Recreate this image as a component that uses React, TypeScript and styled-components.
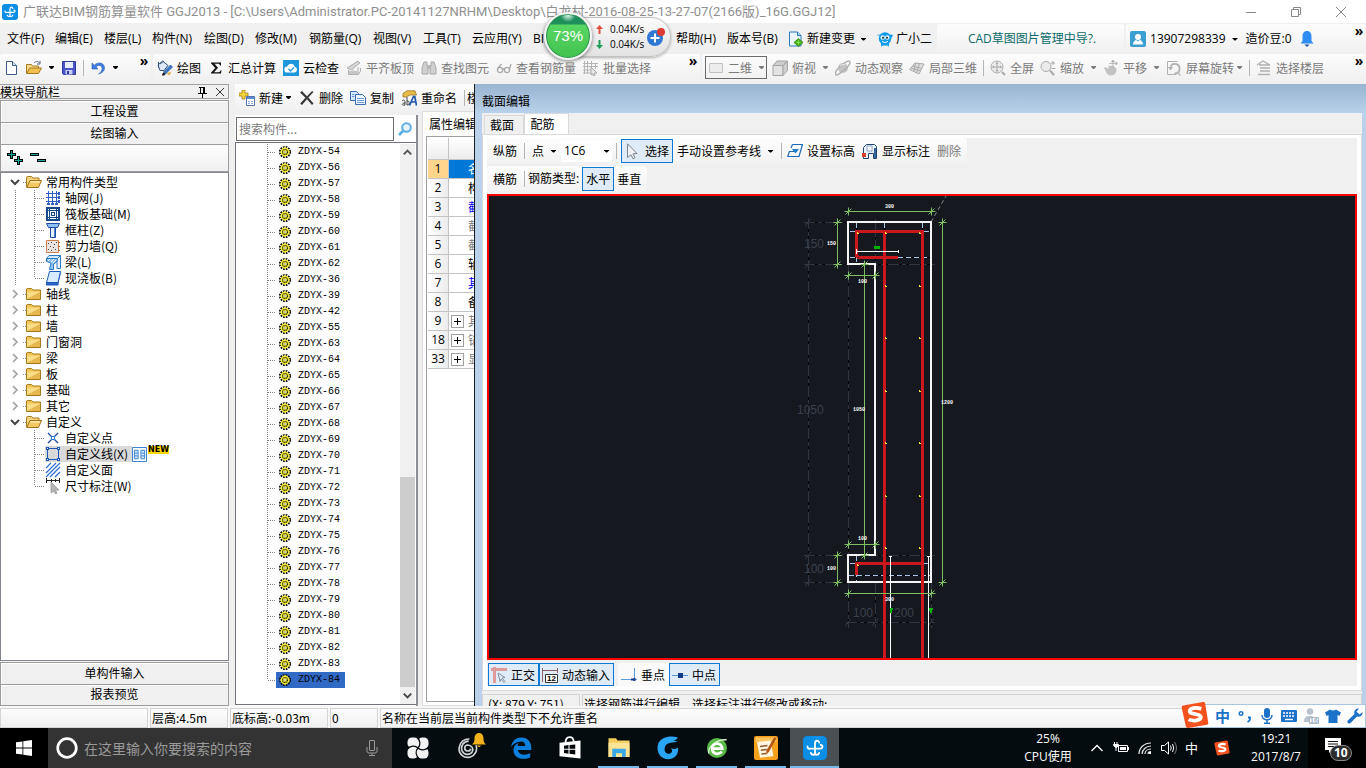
import React from "react";
import styled, { createGlobalStyle } from "styled-components";

const UI_FONT = `"Open Sans", "Noto Sans CJK SC", sans-serif`;
const CJK_FONT = `"Noto Sans CJK SC", sans-serif`;

const GlobalStyle = createGlobalStyle`
  * { box-sizing: border-box; }
  body {
    margin: 0;
    background: #f0f0f0;
    font-family: ${UI_FONT};
    font-size: 12px;
    line-height: 16px;
    color: #000;
    overflow: hidden;
  }
  button, input, select {
    font: inherit;
    color: inherit;
    margin: 0;
    padding: 0;
    border: 0;
    background: none;
    border-radius: 0;
    outline: 0;
  }
  button { white-space: nowrap; }
  svg { display: block; flex: none; }
`;

/* ---------- icons ---------- */

const gear = (
  <>
    <circle cx="8" cy="8" r="5.100" fill="none" stroke="#111" strokeWidth="2" strokeDasharray="1.700 .970" />
    <circle cx="8" cy="8" r="4.400" fill="#f7ee2c" />
    <path d="M8 3v10M3 8h10" stroke="#f7ee2c" />
    <circle cx="8" cy="8" r="2.500" fill="none" stroke="#22220c" strokeWidth="1.200" strokeDasharray="1.400 .560" />
    <path d="M7 7h2v2H7z" fill="#fbfbe0" />
    <path d="M7.500 7.500h1v1h-1z" fill="#333" />
  </>
);

const ggjMark = (
  <>
    <rect x="0" y="0" width="16" height="16" rx="3" fill="#0a8ee6" />
    <path d="M8 12.500V4.800c0-2 2.600-2.200 2.800-.4M3 7c0 1.900 1.400 1.500 2.400 1.400h5.800c2.200 0 2.400-2.400.6-2.400M5.200 11.200c.4 1.700 2.800 1.800 2.800 0 0 1.800 2.400 1.700 2.800 0" fill="none" stroke="#fff" strokeWidth="1.200" strokeLinecap="round" />
  </>
);

const sogou = (
  <>
    <path d="M1.200 2.600 12.600.6q1-.2 1.200.8l1.800 11q.2 1-.8 1.200L4 15.400q-1 .2-1.200-.8L.4 4q-.2-1.200.8-1.400z" fill="#f4511e" />
    <path d="M11.600 4.500C8.500 3.300 4.800 4 5 6c.2 2 6.300 1 6.300 3.200 0 2-4.300 2.600-6.900 1.300" fill="none" stroke="#fff" strokeWidth="2.200" />
  </>
);

const folderClosed = (
  <>
    <path d="M.5 3.500q0-1 1-1h4l1.500 1.500h7.500v9.500h-14z" fill="#f0c14b" stroke="#a67b20" />
    <path d="M1 5.500h13V13H1z" fill="#fbdc86" />
    <path d="M1 13 14 6v7z" fill="#dfa53a" opacity=".7" />
  </>
);

const folderOpen = (
  <>
    <path d="M.5 13V3.500q0-1 1-1h4l1.500 1.500h6v3" fill="#f6d27a" stroke="#a67b20" />
    <path d="M.8 13.500 4 6.500h11.500l-3 7z" fill="#f3c862" stroke="#a0741a" />
    <path d="M4.600 7.300h9.600l-.6 1.300H4z" fill="#fdf0c0" />
  </>
);

const icons: Record<string, React.ReactNode> = {
  gear,
  ggj: ggjMark,
  sogou,
  folderClosed,
  folderOpen,
  newFile: (
    <>
      <path d="M2.500 1.500h6l4 4v9h-10z" fill="#fff" stroke="#3f5a86" />
      <path d="M8.500 1.500v4h4" fill="#cfe0f5" stroke="#3f5a86" />
    </>
  ),
  open: (
    <>
      <path d="M.5 13.500V4.500h5l1 1.500h6v2" fill="#f8dd8c" stroke="#a57a20" />
      <path d="M.8 13.500 3.500 8h12l-3 5.500z" fill="#f0bf4c" stroke="#a57a20" />
      <path d="M8 3c2-2 4-2 5.500 0M14 .800V4h-3" fill="none" stroke="#55677f" />
    </>
  ),
  save: (
    <>
      <path d="M1.500 1.500h13v13h-12l-1-1z" fill="#4a56c8" stroke="#2f3a9c" />
      <path d="M4 2h8v6H4z" fill="#e8ecfb" />
      <path d="M4.500 10h7v4.500h-7z" fill="#c9cfee" />
      <path d="M6 11h2v3H6z" fill="#2f3a9c" />
    </>
  ),
  undo: (
    <path d="M2 3v6h6L6 7c2-2.500 5.500-2 6 .8.4 2.400-1 4.700-3.500 6.200C12.500 13 15 10.500 14.400 7 13.700 2.600 8 1.500 4.300 5.200z" fill="#3f7fe0" stroke="#2b5cb0" strokeWidth=".6" />
  ),
  paint: (
    <>
      <path d="M1 5 5.500 1 11 5.500 7 10.500H3z" fill="#dfe8f4" stroke="#32527e" />
      <path d="M1.500 2v6M3 4l4-3" stroke="#32527e" fill="none" />
      <path d="m6.500 12 7-7 2 2-7 7z" fill="#3c7ac8" stroke="#1f4d8c" strokeWidth=".7" />
      <path d="M5 15.500c0-2 1-3 2-3L8.500 14c-.5 1.500-2 1.800-3.500 1.500z" fill="#222" />
      <path d="m9.500 13.500 5-2-2 4z" fill="#e4b23c" />
    </>
  ),
  sigma: (
    <path d="M3 2.500h10v3h-1c-.2-1.200-.8-1.700-2-1.700H6.500l3.500 4-4 4.400h4.500c1.200 0 1.800-.6 2.200-1.900h.8l-.5 3.200H3v-.8l4.300-4.600L3 3.200z" fill="#111" />
  ),
  cloudCheck: (
    <>
      <rect width="16" height="16" fill="#1f97dc" />
      <path d="M4.500 12.500a3 3 0 0 1-.3-6 4 4 0 0 1 7.600.2 3 3 0 0 1-.1 5.800z" fill="#fff" />
      <path d="m5.500 9 2 2 3.500-3.500" fill="none" stroke="#1f97dc" strokeWidth="1.300" />
    </>
  ),
  alignSlab: (
    <>
      <path d="M1 8 12 1l2 2L5 10z" fill="#d5d5d5" stroke="#b0b0b0" />
      <path d="M2.500 10v4.500h10l2-3.500v-3M7 9.500v5M12 7v7" fill="none" stroke="#b0b0b0" />
      <path d="M3 11h9v3H3z" fill="#c6c6c6" />
    </>
  ),
  binocular: (
    <>
      <path d="M3 2h3v4l1 2v6H1V8zM10 2h3l2 6v6H9V8l1-2z" fill="#d0d0d0" stroke="#a8a8a8" />
      <path d="M6.500 5h3v4h-3z" fill="#b5b5b5" />
    </>
  ),
  glasses: (
    <g fill="none" stroke="#a9a9a9" strokeWidth="1.300">
      <circle cx="4" cy="10" r="2.600" />
      <circle cx="11" cy="10" r="2.600" />
      <path d="M6.500 9.500q1-1 2 0M2 8 5.500 4M13.500 9 15 4" />
    </g>
  ),
  batch: (
    <>
      <path d="M1.500 1v13M4.500 1v13M8.500 1v9M12.500 3v6M0 3.500h15M0 6.500h15M0 10h8M0 13h8" stroke="#b5b5b5" />
      <path d="m8 7 6 6-3 .2 1 2.300-1.500.5-1-2.300L8 15z" fill="#e8e8e8" stroke="#999" strokeWidth=".8" />
    </>
  ),
  plane: <path d="M1.500 3.500h13v9h-13z" fill="#ececec" stroke="#c2c2c2" />,
  cube: (
    <>
      <path d="M1 5.500h10v10H1z" fill="#e2e2e2" stroke="#a5a5a5" />
      <path d="m1 5.500 4-4.500h10.500L11 5.500zM11 15.500V5.500L15.500 1v9.500z" fill="#cecece" stroke="#a5a5a5" />
    </>
  ),
  orbit: (
    <>
      <circle cx="8" cy="8" r="5" fill="#c4c4c4" />
      <path d="M1 15C-1 12 4 7 8 4s7-4 7-2-3 6-7 9-6 5-7 4z" fill="none" stroke="#b0b0b0" strokeWidth="1.400" />
      <path d="M5 6c2-2 4-2 5-1" stroke="#eee" fill="none" />
    </>
  ),
  local3d: (
    <g fill="#dedede" stroke="#ababab">
      <path d="M.5 9.500 6 3l9 1-5 10z" />
      <path d="M3.500 6l9 2.500M6.500 3l-1.500 8.500M10.500 3.500 7.500 13M2 8l9.500 3" fill="none" />
    </g>
  ),
  fullscreen: (
    <g fill="none" stroke="#ababab">
      <circle cx="7" cy="7" r="6" fill="#ebebeb" />
      <path d="M7 2.500v9M2.500 7h9" />
      <path d="m7 2-1.500 2h3zM7 12l-1.500-2h3zM2 7l2-1.500v3zM12 7l-2-1.500v3z" fill="#ababab" stroke="none" />
      <path d="m12 12 3 3" strokeWidth="2" />
    </g>
  ),
  zoom: (
    <g fill="none" stroke="#ababab">
      <circle cx="6" cy="6.500" r="5" fill="#ebebeb" />
      <path d="m10 10.500 4 4.500" strokeWidth="2.200" />
      <path d="M11 3h4M13 1v4M11.500 8.500h4" />
    </g>
  ),
  pan: (
    <>
      <path d="M1 7.500c2-1 3 1 4.500 1.500V6c3-1 7.500 0 8 3.500.3 3-2 6-5.500 6-3.500 0-4.500-2-7-8z" fill="#c2c2c2" />
      <path d="M10 0v8M6 3.500h8M10 0 8.500 2h3zM14.500 3.500 13 2v3z" fill="#b0b0b0" stroke="#b0b0b0" strokeWidth=".8" />
    </>
  ),
  rotate: (
    <g fill="none" stroke="#b0b0b0">
      <path d="M1.500 14.500v-13h10M1.500 14.500h9M13 12.500v2.500h2" />
      <path d="M4.500 6.500a4.800 4.800 0 1 1 4 7" strokeWidth="1.800" />
      <path d="M2 7h5l-2.500 3.500z" fill="#b0b0b0" stroke="none" />
    </g>
  ),
  floors: (
    <g fill="none" stroke="#b0b0b0" strokeWidth="1.400">
      <path d="m1 5 6-4 7 4M3 5h11M4 8h10M4 11h10M2 14.500h12" />
    </g>
  ),
  changeDoc: (
    <>
      <path d="M1.500 1h8l3.500 3.500V15H1.500z" fill="#eaf5fd" stroke="#2b7cb8" />
      <path d="M9.500 1v3.500H13" fill="#9fd0ef" stroke="#2b7cb8" />
      <path d="m10.500 7.500 4.500 4-4.500 4-4.500-4z" fill="#41b014" stroke="#2c7d0c" strokeWidth=".7" />
      <path d="M10.500 9.500v4M8.500 11.500h4" stroke="#8ee05d" />
    </>
  ),
  mascot: (
    <>
      <path d="M0 4.500c1-1.500 3-1.500 4 0M12 4.500c1-1.500 3-1.500 4 0l-2 3H2z" fill="#0f9be8" />
      <path d="M4 12h8v3.500l-2-1h-4l-2 1z" fill="#0f9be8" />
      <circle cx="8" cy="7.500" r="6.200" fill="#0f9be8" />
      <circle cx="5.700" cy="6.500" r="2.200" fill="#e8f6ff" />
      <circle cx="10.300" cy="6.500" r="2.200" fill="#e8f6ff" />
      <circle cx="6" cy="6.700" r="1" fill="#123" />
      <circle cx="10" cy="6.700" r="1" fill="#123" />
      <path d="M5 10.300c2 1.500 4 1.500 6 0" stroke="#fff" fill="none" />
    </>
  ),
  user: (
    <>
      <rect width="16" height="16" rx="2" fill="#3c9fd2" />
      <circle cx="8" cy="6" r="3" fill="#fff" />
      <path d="M3 13.500c0-3 2-4.500 3.500-4.500L8 10.500 9.500 9c1.500 0 3.500 1.500 3.500 4.500z" fill="#fff" />
    </>
  ),
  bell: (
    <>
      <path d="M8 0c3.200 0 4.500 2.500 4.500 5.500V10l2 2.500h-13l2-2.500V5.500C3.500 2.500 4.800 0 8 0z" fill="#2f8df2" />
      <path d="M5.500 13.500h5L8 16z" fill="#1c4f95" />
    </>
  ),
  addItem: (
    <>
      <path d="M3 0h3v3h3v3H6v3H3V6H0V3h3z" fill="#f3d43c" stroke="#a6821a" strokeWidth=".8" />
      <path d="M7.500 6.500h8v9h-8z" fill="#fff" stroke="#5074ac" />
      <path d="M8 7h7v2H8z" fill="#5c8bd0" />
      <path d="M9 11.500h2M12 11.500h2M9 13.500h2M12 13.500h2" stroke="#88a8d4" />
    </>
  ),
  remove: <path d="M1 2.500 3 1l5 5.200L13 1l1.500 1L9.400 7.600l5.100 6L13 15 8 9.300 3 15l-1.800-1.400L6.400 7.700z" fill="#3a3a3a" />,
  copy: (
    <>
      <path d="M.5 1.500h6l2 2v7h-8z" fill="#d7e8fb" stroke="#3b6cb4" />
      <path d="M5.500 4.500h7l3 3v7h-10z" fill="#eef5fd" stroke="#3b6cb4" />
      <path d="M2 4.500h2.500M2 6.500h2.500M7 8.500h7M7 10.500h7M7 12.500h7" stroke="#6f9bd8" />
    </>
  ),
  rename: (
    <>
      <path d="M2 3.500 6 .800h8L15.500 5H9L5 7H2z" fill="#e9bd45" stroke="#8b6a1e" strokeWidth=".7" />
      <path d="M1 11c2-2 3-.5 3 1v3c-3 1-4-1.500 0-2.200M6 7v8c3 .500 3-4.500 0-4" fill="none" stroke="#444" />
      <path d="m8.500 15.500 4-9h1.300l1.700 9M10 12h5" fill="none" stroke="#1d54a8" strokeWidth="1.700" />
    </>
  ),
  search: (
    <g fill="none" stroke="#5aaee6">
      <circle cx="9.500" cy="6.500" r="4.300" strokeWidth="2" fill="#e6f4fd" />
      <path d="m6 10-4 4" strokeWidth="2.600" />
    </g>
  ),
  pin: <path d="M5 3.500h6M6.500 3v6M10.500 3v6M9.500 3v6M4 9.500h9M8.500 10v4" stroke="#000" fill="none" shapeRendering="crispEdges" />,
  close: <path d="m4 4 8 8M12 4l-8 8" stroke="#333" fill="none" />,
  plusPlus: (
    <g shapeRendering="crispEdges">
      <path d="M3 0h3v3h3v3H6v3H3V6H0V3h3zM10 6h3v3h3v3h-3v3h-3v-3H7V9h3z" fill="#000" />
      <path d="M4 1h1v3h3v1H5v3H4V5H1V4h3zM11 7h1v3h3v1h-3v3h-1v-3H8v-1h3z" fill="#12a89e" />
    </g>
  ),
  minusMinus: (
    <g shapeRendering="crispEdges">
      <path d="M0 3h9v3H0zM7 9h9v3H7z" fill="#000" />
      <path d="M1 4h7v1H1zM8 10h7v1H8z" fill="#12a89e" />
    </g>
  ),
  chevDown: <path d="m4 6 4 4 4-4" fill="none" stroke="#444" strokeWidth="2" />,
  chevUp: <path d="m4 10 4-4 4 4" fill="none" stroke="#555" strokeWidth="2" />,
  chevRight: <path d="m6 4 4 4-4 4" fill="none" stroke="#a0a0a0" strokeWidth="1.600" />,
  grid: (
    <g stroke="#2c5fc0" fill="none" shapeRendering="crispEdges">
      <path d="M3.500 1v14M7.500 1v14M11.500 1v14M1 3.500h14M1 7.500h14M1 11.500h14" />
      <path d="M13.500 2.500h1v2h-1zM13.500 6.500h1v2h-1zM13.500 10.500h1v2h-1zM2.500 13.500h2v1h-2zM6.500 13.500h2v1h-2zM10.500 13.500h2v1h-2z" />
    </g>
  ),
  raft: (
    <g stroke="#174a8c" fill="none" shapeRendering="crispEdges">
      <path d="M2 2h12v12H2z" strokeWidth="2" />
      <path d="M4.500 4.500h7v7h-7zM6.500 6.500h3v3h-3zM3 4.500h10M3 11.500h10M4.500 3v10M11.500 3v10" />
    </g>
  ),
  column: (
    <>
      <path d="M1.500 1.500h13l-2 4h-9z" fill="#8fc0f2" stroke="#1d4aa8" />
      <path d="M5.500 5.500h5v10h-5z" fill="#e6f2fe" stroke="#1d4aa8" />
      <path d="M9 6h1v9H9z" fill="#4b82d6" />
    </>
  ),
  wall: (
    <>
      <path d="M1.500 2.500h12v12h-12z" fill="#e9e4e0" stroke="#cc7f50" />
      <path d="M3 5h1v1H3zM6 4h1v1H6zM9 6h1v1H9zM5 8h1v1H5zM8 9h1v1H8zM3 11h1v1H3zM6 12h1v1H6zM10 11h1v1h-1zM11 4h1v1h-1z" fill="#444" />
      <path d="M13 4.500h2M13 8.500h2M13 12.500h2" stroke="#c06020" />
    </>
  ),
  beam: (
    <>
      <path d="M1.500 4.500 4 1.500h11.500l-3 3z" fill="#cfe6fb" stroke="#2a78c8" />
      <path d="M1.500 4.500h11v3L8.500 10v5.500h-4L6 9 1.500 7.500z" fill="#8ec3f2" stroke="#2a78c8" />
      <path d="m12.500 4.500 3-3v13h-3.500V8.500z" fill="#e6f3fe" stroke="#2a78c8" />
      <path d="m3 7 2-2M6 8l3-3M8 9l3-3" stroke="#fff" />
    </>
  ),
  slab: (
    <>
      <path d="M4.500 1.500h11l-2.500 11H1.500z" fill="#d6ebfd" stroke="#1d58b8" />
      <path d="M1.500 12.500H13v2.500H1.500z" fill="#2a66c8" stroke="#1d58b8" />
      <path d="m13 12.500 2.500-11v3L13 15z" fill="#1d58b8" />
    </>
  ),
  point: (
    <>
      <path d="m3 3 10 10M13 3 3 13" stroke="#1d4a9c" strokeWidth="1.300" />
      <path d="M6.500 6.500h3v3h-3z" fill="#fff" stroke="#2d7ad0" />
    </>
  ),
  polyline: (
    <g fill="#fff" stroke="#1d58b8" shapeRendering="crispEdges">
      <path d="M2.500 2.500h11v11h-11z" fill="none" />
      <path d="M1.500 1.500h2v2h-2zM12.500 1.500h2v2h-2zM1.500 12.500h2v2h-2zM12.500 12.500h2v2h-2z" />
    </g>
  ),
  hatch: <path d="M1 6l5-5M1 11 11 1M1 15 15 1M5 15 15 5M10 15l5-5" stroke="#2d6fd0" strokeWidth="1.200" />,
  dimension: (
    <>
      <path d="M1.500 0v5M14.500 0v5M6.500 1v3M10.500 1v3M1 2.500h14" stroke="#222" fill="none" />
      <path d="m6 4 8 8-3.500.3 1.500 3-1.500.7-1.500-3L6 15z" fill="#b4b4b4" stroke="#888" strokeWidth=".6" />
    </>
  ),
  book: (
    <>
      <path d="M.5.500h15v15H.5z" fill="#fff" stroke="#2d7ad0" />
      <path d="M2.500 3.500h4v9h-4zM9.500 3.500h4v9h-4z" fill="#d8ecfc" stroke="#2d7ad0" />
      <path d="M3 6.500h3M3 9.500h3M10 6.500h3M10 9.500h3" stroke="#2d7ad0" />
    </>
  ),
  cursor: <path d="M2.500.800 12 10.500l-4 .300 2 4-2 1-2-4-3.500 2.700z" fill="#f0f2f5" stroke="#7b8390" />,
  elevation: (
    <>
      <path d="M5.500 1.500h10l-3.500 12H.8l1.600-5H9M4 5l1.500-3.500" fill="none" stroke="#1b6cb8" strokeWidth="1.200" />
      <path d="M5 6h7l-3.500 4.500z" fill="#1b7ed0" />
    </>
  ),
  showLabel: (
    <>
      <path d="M1.500 15.500v-11l3-3h8l2 2v12h-3v-5h-5v5z" fill="#e8f0fa" stroke="#21446f" />
      <path d="M5 3h5v5H5z" fill="#fff" stroke="#7692b5" strokeWidth=".8" />
      <path d="M0 10h4v4H0z" fill="#d6402c" />
      <path d="M12 5h2v10h-2z" fill="#35659e" />
    </>
  ),
  ortho: (
    <>
      <path d="M0 2.500h16M3.500 0v16" stroke="#e09a9a" strokeWidth="3" fill="none" />
      <path d="m7 6 7 4.500-3 .500 3 3.500-1 1-3-3.500-1 2.500z" fill="#e6e9ee" stroke="#6b7c96" strokeWidth=".8" />
    </>
  ),
  dynamic: (
    <>
      <path d="M.5 1v14M15.500 1v5M1 3.500h14" stroke="#8a6060" fill="none" />
      <path d="M3.500 7.500h12v8h-12z" fill="#fff" stroke="#333" />
      <text x="5" y="14" fontSize="8" fontWeight="700" fontFamily="Liberation Sans, sans-serif">12</text>
    </>
  ),
  perp: (
    <>
      <path d="M13.500 1v11M0 12.500h16" stroke="#5a9ad8" fill="none" />
      <path d="M13.500 11v3M10 12.500h3" stroke="#12398c" strokeWidth="2" />
    </>
  ),
  mid: (
    <>
      <path d="M0 8.500h16" stroke="#5a9ad8" fill="none" />
      <path d="M6 6h5v5H6z" fill="#12398c" />
    </>
  ),
  win: <path d="m0 2.300 6.500-.9v6.200H0zM7.300 1.300 16 0v7.600H7.300zM0 8.400h6.500v6.200L0 13.700zM7.300 8.400H16V16l-8.700-1.300z" fill="#fff" />,
  ring: <circle cx="8" cy="8" r="6.200" fill="none" stroke="#fff" strokeWidth="1.800" />,
  mic: (
    <g fill="none" stroke="#9a9a9a">
      <rect x="5.500" y=".5" width="5" height="10" rx=".5" />
      <path d="M3 7v4q0 2 2 2h6q2 0 2-2V7M8 13v3M5 15.500h6" />
    </g>
  ),
  pinwheel: (
    <>
      <g fill="#f2f2f2">
        <rect x="1" y="1" width="7.500" height="7" rx="3" />
        <rect x="8" y="1" width="7" height="7.500" rx="3" />
        <rect x="7.500" y="8" width="7.500" height="7" rx="3" />
        <rect x="1" y="7.500" width="7" height="7.500" rx="3" />
        <circle cx="8" cy="8" r="3" />
      </g>
      <path d="M8 8C10 6 9.500 3 7.500 1M8 8c2 2 5 1.500 7-.5M8 8c-2 2-1.500 5 .5 7M8 8C6 6 3 6.500 1 8.500" fill="none" stroke="#05090c" strokeWidth=".8" />
    </>
  ),
  swirl: (
    <path d="M10 8.500a2.200 2.200 0 1 1-2.200-2.700c2.800 0 4.400 2.600 3.300 4.900-1.400 2.700-5.800 2.700-7.300-.5C2.300 6.700 4.800 3 8.500 3M13.800 6c1.300 3.600-.5 7.300-4 8.500-4.700 1.500-9-2.200-8.200-7C2.300 3.500 5.500 1.200 9 1.500" fill="none" stroke="#d0d4d6" strokeWidth="1.200" />
  ),
  goldBell: <path d="M8 1c3 0 4.500 2.500 4.500 5.500 0 3 .500 4 2.500 6H1c2-2 2.500-3 2.500-6C3.500 3.500 5 1 8 1zM6 13.500h4q-2 3-4 0z" fill="#f2b21b" />,
  edge: (
    <path d="M.8 7.200C1.500 2.500 4.600.300 8.300.300c4.600 0 7.200 3.300 7.200 7.300v1.900H5.800c.2 2.300 2.200 3.400 4.600 3.400 1.600 0 3.100-.5 4.300-1.200v3c-1.300.8-3.100 1.200-4.900 1.200-4.300 0-7.300-2.500-7.300-6.500C2.500 7 4 5 6.400 4.100c-.5.700-.8 1.600-.8 2.400h5.500c0-2-.9-3.300-3.200-3.300C5.100 3.200 2.300 4.700.8 7.200z" fill="#0c7fdc" />
  ),
  store: (
    <>
      <path d="M1 4.500 15 3v12L1 13.500z" fill="#fff" />
      <path d="M5 4.500C5-.500 10.500-.5 10.500 4" fill="none" stroke="#fff" strokeWidth="1.200" />
      <path d="M4 6.500 7 6v2.500H4zM7.700 6l3.800-.4v2.900H7.700zM4 9.200h3v2.600l-3-.4zM7.700 9.200h3.800v3.100l-3.800-.4z" fill="#05090c" />
    </>
  ),
  explorer: (
    <>
      <path d="M1 1.500h5l1 1.500h8v11H1z" fill="#f5cd5d" />
      <path d="M1 4.500h14V14H1z" fill="#fde394" />
      <path d="M3.500 8.500h9V14H10v-2.500H6V14H3.500z" fill="#3aa7e6" />
    </>
  ),
  gBlue: (
    <path d="M14.500.800C9-.500 3.500.500 1.500 5-.3 10.500 3 15.500 8 15.500c4.500 0 7.500-3.500 6.500-8-1 1.500-3 1.500-4.500.5 1 1.200 1 2.700-.3 3.500-2 1-4-.3-4-2.500C5.700 6.500 7 5.200 9 4.700c2-.5 4.500-.4 5.500-1.200-1 .1-2 0-2.700-.5 1.200-.3 2.200-1 2.700-2.200z" fill="#2aa5f4" />
  ),
  eGreen: (
    <>
      <circle cx="8" cy="8" r="7.300" fill="#58b947" />
      <path d="M2 12C1 8 7 1.500 15 2" stroke="#d8f5cf" fill="none" />
      <path d="M4.500 8.500h7.300C11.500 3.500 4.500 3.700 4.500 8.500c0 4 5 4.800 7 2" fill="none" stroke="#fff" strokeWidth="2" />
    </>
  ),
  notes: (
    <>
      <rect width="16" height="16" rx="1.500" fill="#f6a01c" />
      <path d="M1 1h14v3H1z" fill="#fbc35c" />
      <path d="m2 4 9-1 2 10.500-9 1z" fill="#fff6e0" />
      <path d="m4 7 5-.7M4.500 9.500l4-.5M5 12l3-.3" stroke="#8c5a30" />
      <path d="M15 1.500 10 10.500l-2 2 .3-2.800L13.500.800z" fill="#b5561a" />
    </>
  ),
  caretUp: <path d="m2.500 11 5.500-5.500L13.500 11" fill="none" stroke="#fff" strokeWidth="1.300" />,
  battery: (
    <>
      <path d="M5.500 5.500h9v6h-9zM15.500 7v3" fill="none" stroke="#fff" />
      <path d="M7 7h6v3H7z" fill="#fff" />
      <path d="M1.500 2v2M4 2v2M.5 4.500h5V6q-2.500 3-4.500 0zM3 7v4" stroke="#fff" fill="#fff" />
    </>
  ),
  wifi: (
    <g fill="none" stroke="#e8e8e8" strokeWidth="1.200">
      <path d="M2 14C2 8 7 3 14 3M5 14c0-4 4-8 9-8M8 14c0-3 2.500-5 6-5M11 14c0-1.500 1-2.500 3-2.500" />
      <path d="M12 12h2v2h-2z" fill="#fff" stroke="none" />
    </g>
  ),
  volume: (
    <g fill="none" stroke="#fff">
      <path d="M.5 5.500h3l4-3.500v12l-4-3.500h-3z" />
      <path d="M9.500 5.500q1.500 2.500 0 5M11.500 4q2.500 4 0 8" />
      <path d="M13.500 2q4 6 0 12" stroke="#777" />
    </g>
  ),
  notice: (
    <>
      <path d="M0 0h16v12H7l-3 3v-3H0z" fill="#fff" />
      <path d="M3 3.500h10M3 6h10M3 8.500h6" stroke="#111" />
    </>
  ),
  punct: (
    <g fill="none" stroke="#1c72c8">
      <circle cx="4" cy="5.500" r="1.800" strokeWidth="1.400" />
      <path d="M11 9.500h2q.5 3-2.500 4.500" strokeWidth="1.800" />
    </g>
  ),
  micBlue: (
    <g>
      <rect x="5" y="0" width="6" height="10" rx="3" fill="#1c72c8" />
      <path d="M3 7c0 6.500 10 6.500 10 0M8 12v3M5 15.200h6" stroke="#1c72c8" strokeWidth="1.500" fill="none" />
    </g>
  ),
  keyboard: (
    <>
      <rect y="2" width="16" height="12" rx="1" fill="#1c72c8" />
      <path d="M2 5h12M2 8h12" stroke="#fff" strokeWidth="1.400" strokeDasharray="2 1" />
      <path d="M4 11.500h8" stroke="#fff" strokeWidth="1.400" />
    </>
  ),
  person: (
    <>
      <circle cx="7" cy="3.500" r="3.200" fill="#b8c3d0" />
      <path d="M1 14c0-5 2-6 6-6s5 2 5 6z" fill="#b8c3d0" />
      <path d="M6.500 9.500h9v6h-9z" fill="#fff" stroke="#a9b7c8" />
      <text x="7" y="15" fontSize="7" fontWeight="700" fill="#a0b0c4" fontFamily="Liberation Sans, sans-serif">16</text>
    </>
  ),
  shirt: <path d="M5 1.500q3 2 6 0l5 3-1.700 3.500L12.500 7v8h-9V7l-1.800 1L0 4.500z" fill="#1c72c8" />,
  wrench: <path d="M15.500 4 12.500 6.500l-3-3L12 .5C8.500 0 6.500 3 7.500 6L.8 12.500c-1.500 2 1 4 2.700 2.500L10 8.500C13.500 9.500 16 7 15.500 4z" fill="#1c72c8" />,
};

const Icon = ({ name, size = 16 }: { name: string; size?: number }) => (
  <svg width={size} height={size} viewBox="0 0 16 16" aria-hidden="true">
    {icons[name]}
  </svg>
);

/* ---------- shared parts ---------- */

const Caret = styled.i<{ $tight?: boolean }>`
  flex: none;
  width: 9px;
  height: 3px;
  margin-left: ${(p) => (p.$tight ? "-4px" : "0")};
  background: currentColor;
  clip-path: polygon(3px 0, 8px 0, 8px 1px, 6px 3px, 5px 3px, 3px 1px);
`;

const Sep = styled.span`
  flex: none;
  width: 1px;
  height: 16px;
  background: #b4b4b4;
`;

const Band = styled.div<{ $basis?: number; $gap?: number }>`
  display: flex;
  align-items: center;
  gap: ${(p) => p.$gap ?? 7}px;
  padding: 0 1px 0 4px;
  min-width: 0;
  flex: ${(p) => (p.$basis ? `0 0 ${p.$basis}px` : "1 1 0")};
  border-radius: 3px;
  background: linear-gradient(#fdfdfd, #f0f0f0);
`;

const ToolButton = styled.button<{ $dim?: boolean; $on?: boolean }>`
  flex: none;
  display: flex;
  align-items: center;
  gap: 4px;
  height: 24px;
  color: ${(p) => (p.$dim ? "#7a7a7a" : "#000")};
  font-family: ${CJK_FONT};
  ${(p) =>
    p.$on &&
    `
    padding: 0 3px;
    border: 1px solid #0a78d4;
    background: #dfebf6;
  `}
`;

const Account = styled(ToolButton)`
  font-family: ${UI_FONT};
`;

const More = styled.button`
  align-self: flex-start;
  margin-left: auto;
  width: 12px;
  height: 14px;
  font: 700 14px/12px "Open Sans", sans-serif;
`;

const Tool = (p: { icon?: string; label?: string; dim?: boolean; on?: boolean; caret?: boolean; tight?: boolean; name?: string }) => (
  <ToolButton type="button" $dim={p.dim} $on={p.on} aria-label={p.name}>
    {p.icon && <Icon name={p.icon} />}
    {p.label}
    {p.caret && <Caret $tight={p.tight} />}
  </ToolButton>
);

/* ---------- frame ---------- */

const Page = styled.div`
  display: flex;
  flex-direction: column;
  height: 100vh;
  position: relative;
`;

const TitleBar = styled.header`
  flex: none;
  display: flex;
  align-items: center;
  height: 23px;
  padding-left: 2px;
  gap: 5px;
  background: #fff;
  color: #8f8f8f;
  font-family: Roboto, ${CJK_FONT};
  font-size: 13px;
  white-space: nowrap;
`;

const WinButtons = styled.div`
  display: flex;
  gap: 29px;
  margin-left: auto;
  padding-right: 17px;
`;

const MenuBar = styled.nav`
  flex: none;
  display: flex;
  height: 31px;
  gap: 2px;
  padding-top: 1px;
`;

const MenuItems = styled.div`
  display: flex;
  align-items: center;
  gap: 10px;
  flex: 0 0 935px;
  padding-left: 7px;
`;

const MenuButton = styled.button<{ $w: number }>`
  flex: 0 0 ${(p) => p.$w}px;
  display: flex;
  align-items: center;
  gap: 3px;
`;

const News = styled.a`
  flex: 1;
  text-align: center;
  color: #0b6b6b;
  text-decoration: none;
`;

const ToolBar = styled.div`
  flex: none;
  display: flex;
  height: 30px;
  gap: 2px;
  padding-bottom: 3px;
`;

const Combo = styled.label`
  flex: none;
  display: flex;
  align-items: center;
  gap: 4px;
  width: 62px;
  height: 23px;
  margin: 0 -1px;
  padding: 0 2px;
  border: 1px solid #6a6a6a;
  color: #7a7a7a;
  select { appearance: none; width: 24px; font-family: ${CJK_FONT}; }
`;

const Main = styled.main`
  flex: 1 1 0;
  min-height: 0;
  display: flex;
  overflow: hidden;
`;

/* ---------- navigation panel ---------- */

const NavPanel = styled.aside`
  flex: 0 0 229px;
  display: flex;
  flex-direction: column;
`;

const NavHead = styled.div`
  display: flex;
  align-items: center;
  height: 15px;
  margin-bottom: 1px;
  border: 1px solid #a0a0a0;
  border-left: 0;
  h2 { margin: 0 auto 0 0; font: 12px/13px ${CJK_FONT}; }
  button + button { margin-left: 2px; }
`;

const NavButton = styled.button`
  height: 22px;
  border: 1px solid #9c9c9c;
  border-bottom-width: 0;
  box-shadow: inset 1px 1px #fff;
  text-align: center;
  &:last-child { border-bottom-width: 1px; }
`;

const NavTools = styled.div`
  display: flex;
  align-items: center;
  gap: 7px;
  height: 28px;
  padding-left: 6px;
  border: 1px solid #9c9c9c;
  background: linear-gradient(#fdfdfd, #f0f0f0);
`;

const TreeBox = styled.div`
  flex: 1;
  min-height: 0;
  margin-bottom: 1px;
  padding: 1px 0 0 2px;
  border: 1px solid #828790;
  background: #fff;
  overflow: hidden;
`;

const TreeRow = styled.div`
  display: flex;
  align-items: center;
  height: 16px;
  font-family: ${CJK_FONT};
  white-space: nowrap;
`;

const TreeLabel = styled.span<{ $on?: boolean }>`
  display: flex;
  align-items: center;
  gap: 4px;
  height: 16px;
  padding-right: 4px;
  background: ${(p) => (p.$on ? "#d9d9d9" : "none")};
`;

const NewTag = styled.sup`
  align-self: flex-start;
  margin-left: 1px;
  background: #ffd800;
  font: 700 8px/8px "DejaVu Sans", sans-serif;
`;

type Node = { icon?: string; label: string; open?: boolean; leaf?: boolean; last?: boolean; on?: boolean; rail?: boolean };

const nodes: Node[] = [
  { label: "常用构件类型", open: true },
  { label: "轴网(J)", icon: "grid", leaf: true, rail: true },
  { label: "筏板基础(M)", icon: "raft", leaf: true, rail: true },
  { label: "框柱(Z)", icon: "column", leaf: true, rail: true },
  { label: "剪力墙(Q)", icon: "wall", leaf: true, rail: true },
  { label: "梁(L)", icon: "beam", leaf: true, rail: true },
  { label: "现浇板(B)", icon: "slab", leaf: true, rail: true, last: true },
  { label: "轴线" },
  { label: "柱" },
  { label: "墙" },
  { label: "门窗洞" },
  { label: "梁" },
  { label: "板" },
  { label: "基础" },
  { label: "其它" },
  { label: "自定义", open: true },
  { label: "自定义点", icon: "point", leaf: true },
  { label: "自定义线(X)", icon: "polyline", leaf: true, on: true },
  { label: "自定义面", icon: "hatch", leaf: true },
  { label: "尺寸标注(W)", icon: "dimension", leaf: true, last: true },
];

const TreeNode = ({ n }: { n: Node }) =>
  n.leaf ? (
    <TreeRow>
      <svg width="42" height="16" stroke="#808080" strokeDasharray="1 1" shapeRendering="crispEdges">
        {n.rail && <path d="M12.500 0v16" />}
        <path d={`M31.500 0v${n.last ? 8 : 16}M32 8.500h10`} />
      </svg>
      <TreeLabel $on={n.on}>
        <Icon name={n.icon!} />
        {n.label}
      </TreeLabel>
      {n.on && (
        <>
          <Icon name="book" size={15} />
          <NewTag>NEW</NewTag>
        </>
      )}
    </TreeRow>
  ) : (
    <TreeRow>
      <svg width="23" height="16" aria-hidden="true">
        <g transform="translate(4 0)">{icons[n.open ? "chevDown" : "chevRight"]}</g>
        <path d="M20 8.500h3" stroke="#808080" strokeDasharray="1 1" />
      </svg>
      <TreeLabel>
        <Icon name={n.open ? "folderOpen" : "folderClosed"} />
        {n.label}
      </TreeLabel>
    </TreeRow>
  );

/* ---------- component list and properties ---------- */

const Center = styled.section`
  flex: 0 0 240px;
  display: flex;
  flex-direction: column;
  margin-left: 6px;
  overflow: hidden;
  border-right: 1px solid #1c1c1c;
`;

const CenterTools = styled.div`
  flex: none;
  display: flex;
  align-items: center;
  gap: 7px;
  height: 27px;
  padding-left: 4px;
  background: linear-gradient(#fdfdfd, #f0f0f0);
`;

const CenterBody = styled.div`
  flex: 1;
  min-height: 0;
  display: flex;
  gap: 4px;
`;

const ListPanel = styled.div`
  flex: 0 0 183px;
  display: flex;
  flex-direction: column;
  margin-top: 4px;
  border-right: 2px solid #8d9096;
  background: #fff;
`;

const SearchRow = styled.div`
  flex: none;
  display: flex;
  padding: 2px 0 1px 1px;
  height: 27px;
  input { flex: 1; min-width: 0; padding: 0 2px; border: 1px solid #6e6e6e; font-family: ${CJK_FONT}; }
  input::placeholder { color: #7c7c7c; opacity: 1; }
  button { padding: 0 3px; }
`;

const ListBox = styled.div`
  flex: 1;
  min-height: 0;
  display: flex;
  margin-bottom: 1px;
  border: 1px solid #6e737b;
  border-width: 1px 0 1px 1px;
  padding-top: 1px;
`;

const List = styled.ul`
  flex: 1;
  min-width: 0;
  margin: 0;
  padding: 0;
  list-style: none;
  overflow: hidden;
`;

const ListItem = styled.li`
  display: flex;
  height: 16px;
`;

const ListLabel = styled.span<{ $on?: boolean }>`
  display: flex;
  align-items: center;
  gap: 5px;
  padding: 0 5px 0 1px;
  background: ${(p) => (p.$on ? "#316ac5" : "none")};
  font: 10px/16px "Liberation Mono", monospace;
`;

const Scroll = styled.div`
  flex: 0 0 15px;
  display: flex;
  flex-direction: column;
  margin-right: 1px;
  background: #f0f0f0;
  button { height: 17px; }
`;

const Thumb = styled.div`
  flex: 0 0 210px;
  margin-top: auto;
  background: #cdcdcd;
`;

const PropPanel = styled.div`
  flex: 1;
  min-width: 0;
  display: flex;
  flex-direction: column;
  padding-left: 3px;
  border: 1px solid #dcdcdc;
  border-right: 0;
  background: #fff;
  overflow: hidden;
  h3 { flex: none; margin: 0 0 0 3px; font: 12px/24px ${CJK_FONT}; white-space: nowrap; }
`;

const TableBox = styled.div`
  flex: 1;
  margin-bottom: 3px;
  padding: 1px 0 1px 1px;
  border: 1px solid #a0a0a0;
  border-right: 0;
  overflow: hidden;
`;

const Table = styled.table`
  width: 100%;
  table-layout: fixed;
  border-collapse: separate;
  border-spacing: 0;
  col:first-child { width: 21px; }
  th, td { height: 19px; padding: 0; line-height: 16px; border-bottom: 1px solid #c4c4c4; font-weight: 400; white-space: nowrap; }
  th:first-child { border-right: 1px solid #c4c4c4; }
  thead th { height: 22px; background: linear-gradient(#fff, #ececec); }
`;

const RowHead = styled.th<{ $sel?: boolean }>`
  background: ${(p) => (p.$sel ? "#ffd48c" : "linear-gradient(90deg, #fff, #ececec)")};
`;

const Cell = styled.td<{ $color: string; $sel?: boolean }>`
  color: ${(p) => p.$color};
  background: ${(p) => (p.$sel ? "#0078d7" : "#fff")};
  font-family: ${CJK_FONT};
  overflow: hidden;
  span { display: flex; align-items: center; }
  svg { margin: 0 4px 0 2px; }
  em { font-style: normal; margin-left: 19px; }
  svg + em { margin-left: 0; }
`;

const props: [string, string, string, boolean?][] = [
  ["1", "名", "#fff"],
  ["2", "构", "#000"],
  ["3", "截", "#0000f0"],
  ["4", "截", "#7c7c7c"],
  ["5", "截", "#7c7c7c"],
  ["6", "轴", "#000"],
  ["7", "其", "#0000f0"],
  ["8", "备", "#000"],
  ["9", "其", "#7c7c7c", true],
  ["18", "锚", "#7c7c7c", true],
  ["33", "显", "#7c7c7c", true],
];

const listIds = [54, 56, 57, 58, 59, 60, 61, 62, 36, 39, 42, 55, ...Array.from({ length: 22 }, (_, i) => 63 + i)];

/* ---------- section editor window ---------- */

const Editor = styled.section`
  flex: 1;
  min-width: 0;
  display: flex;
  flex-direction: column;
  padding: 0 4px 0 7px;
  background: #b9d1ea;
  h2 {
    flex: none;
    margin: 0 -4px 0 -7px;
    padding: 5px 0 0 7px;
    height: 29px;
    background: linear-gradient(#99b4d1, #b9d1ea);
    font: 12px/24px ${CJK_FONT};
  }
`;

const EditorBody = styled.div`
  flex: 1;
  min-height: 0;
  display: flex;
  flex-direction: column;
  background: #f0f0f0;
`;

const Tabs = styled.div`
  flex: none;
  display: flex;
  align-items: flex-end;
  height: 21px;
  padding-left: 2px;
`;

const Tab = styled.button<{ $on?: boolean }>`
  width: ${(p) => (p.$on ? "45px" : "40px")};
  height: ${(p) => (p.$on ? "21px" : "19px")};
  padding-right: ${(p) => (p.$on ? "8px" : "4px")};
  border: 1px solid #d9d9d9;
  border-bottom: 0;
  background: ${(p) => (p.$on ? "#fff" : "#f0f0f0")};
  font-family: ${CJK_FONT};
`;

const TabPanel = styled.div`
  flex: 1;
  min-height: 0;
  display: flex;
  flex-direction: column;
  margin-bottom: 3px;
  padding: 3px 4px 4px 4px;
  border: 1px solid #d9d9d9;
  background: #fff;
`;

const PanelFill = styled.div`
  flex: 1;
  min-height: 0;
  display: flex;
  flex-direction: column;
  align-items: flex-start;
  background: #f0f0f0;
`;

const EditBar = styled.div`
  flex: none;
  display: flex;
  align-items: center;
  height: 26px;
  margin-bottom: 2px;
  padding: 0 6px;
  border-radius: 3px;
  background: linear-gradient(#fdfdfd, #f2f2f2);
  gap: 7px;
`;

const Tight = styled.div<{ $gap: number }>`
  display: flex;
  align-items: center;
  gap: ${(p) => p.$gap}px;
`;

const BarSelect = styled.label`
  display: flex;
  align-items: center;
  width: 51px;
  height: 22px;
  background: #fff;
  select { appearance: none; width: 40px; padding-left: 3px; }
`;

const CanvasBox = styled.div`
  flex: 1;
  min-height: 0;
  align-self: stretch;
  border: 2px solid #f00;
  background: #15181f;
  overflow: hidden;
`;

const SnapBar = styled.div`
  flex: none;
  display: flex;
  height: 26px;
  padding: 3px 1px 0;
  font-family: ${CJK_FONT};
`;

const Snap = styled(ToolButton)`
  height: 23px;
  padding: 0 3px 0 2px;
  margin-left: ${(p) => (p.$on ? "0" : "4px")};
  border: 1px solid ${(p) => (p.$on ? "#0a78d4" : "transparent")};
  background: ${(p) => (p.$on ? "#dfebf6" : "#fafafa")};
`;

const EditorStatus = styled.div`
  flex: 0 0 12px;
  display: flex;
  gap: 2px;
  overflow: hidden;
  background: #f0f0f0;
  span {
    flex: 1;
    height: 22px;
    border: 1px solid #d4d4d4;
    padding-left: 1px;
    font: 12px/18px ${CJK_FONT};
    white-space: nowrap;
  }
  span:first-child { flex: 0 0 98px; padding-left: 5px; }
`;

/* Section drawing. Coordinates are in drawing space; the group shifts them to the view. */

const Tick = ({ x, y }: { x: number; y: number }) => (
  <path d={`M${x - 3} ${y + 3}l6-6M${x - 4} ${y}h8M${x} ${y - 4}v8`} />
);

const dark = [
  "M804 222.500h44", "M804 264.500h131", "M804 555.500h131", "M804 582.500h44",
  "M808.500 218v368", "M848.500 265v363", "M875.500 219v45", "M875.500 582v46", "M931.500 583v45", "M846 622.500h89",
];

const hidden = [
  "M850 231.500h7", "M856.500 223v8", "M856.500 257v6", "M884.500 223v7", "M922.500 223v7", "M924 231.500h7",
  "M850 257.500h6", "M898 257.500h32", "M849 575.500h81", "M856.500 556v26", "M850 563.500h6", "M924 563.500h7",
];

const tiny: [number, number, string][] = [
  [885, 208, "300"], [827, 245, "150"], [858, 283, "100"], [853, 411, "1050"],
  [941, 404, "1200"], [858, 540, "100"], [827, 570, "100"], [885, 601, "300"],
];

const faint: [number, number, string][] = [
  [804, 248, "150"], [797, 414, "1050"], [804, 573, "100"], [853, 617, "100"], [894, 617, "200"],
];

const ticks: [number, number][] = [
  [848.5, 211.5], [931.5, 211.5], [837.5, 222.5], [837.5, 264.5], [848.5, 275.5], [875.5, 275.5], [864.5, 264.5], [864.5, 555.5],
  [942.5, 222.5], [942.5, 582.5], [848.5, 544.5], [875.5, 544.5], [837.5, 555.5], [837.5, 582.5], [848.5, 593.5], [931.5, 593.5],
];

const Section = () => (
  <svg width="100%" height="100%" role="img" aria-label="截面配筋图">
    <g transform="translate(-489 -196)" fill="none">
      <g shapeRendering="crispEdges">
        <path d={dark.join("")} stroke="#000" />
        <path d={dark.join("")} stroke="#2f3642" strokeDasharray="11 3 4 3" />
        <path d="M805 226l6-7M805 268l6-7M805 559l6-7M805 586l6-7M845 626l6-7M872 626l6-7M928 626l6-7" stroke="#2f3642" />
      </g>
      <g fill="#3a414d" fontFamily="Liberation Sans, sans-serif" fontSize="12">
        {faint.map(([x, y, t]) => (
          <text key={`${x}-${y}`} x={x} y={y}>{t}</text>
        ))}
      </g>
      <path d="M931 222l15-26" stroke="#8d8d8d" strokeDasharray="4 3" />
      <g shapeRendering="crispEdges">
        <path d={hidden.join("")} stroke="#000" />
        <path d={hidden.join("")} stroke="#a9c6ea" strokeDasharray="5 3" />
        <path d="M848 222H931V582H848V555H875V264H848z" stroke="#f4f4f4" strokeWidth="2" />
        <path d="M898 257.500H858.500L856.500 255.500V231.500H922.500V658M884.500 231V658M856.500 575V563.500H922" stroke="#cc171d" strokeWidth="3" />
        <path d="M856.500 249v5M857 251.500h42M898.500 250v3M890.500 556v102M889 556.500h3M928.500 556v102M927 556.500h3" stroke="#fff" />
        <path d="M848 211.500h83M837.500 222v42M848 275.500h28M864.500 264v291M942.500 222v360M848 544.500h28M837.500 555v27M848 593.500h83" stroke="#7ebd62" />
        <path d="M874 246h6v3h-6zM890 608h3v2h-1v3h-2zM929 608h4v2h-1v3h-2v-2h-1z" fill="#00b400" />
        <g fill="#f3e332">
          <path d="M857 232h1v1h1v1h-2zM885 232h1v1h1v1h-2zM919 232h1v1h1v1h-2zM857 564h1v1h1v1h-2z" />
          {[285, 337, 390, 442, 495, 547].map((y) => (
            <path key={y} d={`M885 ${y}h1v1h1v1h-2zM919 ${y}h1v1h1v1h-2z`} />
          ))}
        </g>
      </g>
      <g stroke="#7ebd62">
        {ticks.map(([x, y]) => (
          <Tick key={`${x}-${y}`} x={x} y={y} />
        ))}
      </g>
      <g fill="#fff" fontFamily="Liberation Mono, monospace" fontSize="5" fontWeight="700">
        {tiny.map(([x, y, t]) => (
          <text key={`${x}-${y}`} x={x} y={y}>{t}</text>
        ))}
      </g>
    </g>
  </svg>
);

/* ---------- status bar and taskbar ---------- */

const StatusBar = styled.footer`
  flex: none;
  display: flex;
  gap: 2px;
  height: 22px;
  padding-top: 2px;
  background: #f7f7f7;
`;

const StatusCell = styled.span<{ $w?: number }>`
  flex: ${(p) => (p.$w ? `0 0 ${p.$w}px` : "1")};
  padding-left: 1px;
  border: 1px solid #d4d4d4;
  background: linear-gradient(#fdfdfd, #f0f0f0);
  font: 12px/18px ${CJK_FONT};
  white-space: nowrap;
`;

const TaskBar = styled.footer`
  flex: none;
  display: flex;
  height: 40px;
  background: #040c10;
  color: #fff;
`;

const StartButton = styled.button`
  flex: 0 0 48px;
  display: grid;
  place-items: center;
  background: #000;
`;

const TaskSearch = styled.label`
  flex: 0 0 344px;
  display: flex;
  align-items: center;
  gap: 5px;
  padding: 0 12px 0 7px;
  background: #333;
  input { flex: 1; min-width: 0; font: 14px/20px ${CJK_FONT}; }
  input::placeholder { color: #9a9a9a; opacity: 1; }
`;

const TaskApp = styled.button<{ $run?: boolean; $active?: boolean; $wide?: boolean }>`
  flex: 0 0 ${(p) => (p.$wide ? 52 : 49)}px;
  display: flex;
  align-items: center;
  justify-content: center;
  background: ${(p) => (p.$active ? "#4a5053" : "none")};
  border-bottom: 2px solid transparent;
  border-top: 2px solid transparent;
  border-image: ${(p) =>
    p.$active
      ? "linear-gradient(90deg, #76b9ed, #76b9ed) 0 0 2 0"
      : p.$run
        ? "linear-gradient(90deg, transparent 4px, #76b9ed 4px, #76b9ed 45px, transparent 45px) 0 0 2 0"
        : "none"};
`;

const Bell = styled.span`
  align-self: flex-start;
  margin: 2px -4px 0 -8px;
`;

const Tray = styled.div`
  flex: 1;
  display: flex;
  align-items: center;
  justify-content: flex-end;
  gap: 8px;
`;

const ImeMode = styled.span`
  width: 21px;
  font: 13px/16px ${CJK_FONT};
`;

const Stack = styled.div<{ $w: number; $after?: number }>`
  width: ${(p) => p.$w}px;
  margin-right: ${(p) => p.$after ?? 0}px;
  text-align: center;
  line-height: 18px;
  white-space: nowrap;
`;

const Notice = styled.button`
  flex: none;
  display: flex;
  align-items: center;
  width: 58px;
  height: 40px;
  margin-left: -14px;
  padding: 0 0 4px 17px;
  background: #000;
  color: #fff;
  span {
    margin: 14px 0 0 -11px;
    padding: 0 3px;
    border: 1px solid #888;
    border-radius: 9px;
    background: #2c2c2c;
    font-weight: 700;
    line-height: 14px;
  }
`;

const ImeBar = styled.div`
  position: absolute;
  right: 0;
  bottom: 40px;
  display: flex;
  align-items: center;
  gap: 6px;
  width: 170px;
  height: 24px;
  padding-left: 18px;
  border: 1px solid #a9c4dc;
  background: #fff;
  color: #1c72c8;
  b { font: 700 15px/20px ${CJK_FONT}; width: 16px; }
`;

const ImeLogo = styled.span`
  position: absolute;
  left: -16px;
  top: -4px;
`;

const Meter = styled.div`
  position: absolute;
  left: 545px;
  top: 17px;
  display: flex;
  align-items: center;
  width: 126px;
  height: 40px;
  padding-left: 50px;
  border: 1px solid #c2c2c2;
  border-radius: 20px;
  background: linear-gradient(#fbfbfb, #e2e2e2);
  box-shadow: 0 1px 3px rgba(0, 0, 0, 0.3);
  font: 10px/15px "Open Sans", sans-serif;
  p { margin: 0; display: flex; gap: 7px; align-items: center; white-space: nowrap; }
`;

const MeterBall = styled.div`
  position: absolute;
  left: -2px;
  top: -6px;
  width: 48px;
  height: 48px;
  display: grid;
  place-items: center;
  border: 2px solid #f3f3f3;
  border-radius: 50%;
  background: radial-gradient(circle at 50% 0, #e4fff0 0 1px, transparent 8px), linear-gradient(#1f8f5c 0 10px, #58d663 11px, #42c24f);
  box-shadow: inset 0 0 0 1px #2c8f52, 0 1px 4px rgba(0, 0, 0, 0.5);
  color: #fff;
  font: 15px/20px "Liberation Sans", sans-serif;
`;

const MeterPlus = styled.button`
  width: 18px;
  height: 22px;
  margin-left: 2px;
`;

const menus: [string, number][] = [
  ["文件(F)", 38], ["编辑(E)", 39], ["楼层(L)", 38], ["构件(N)", 42], ["绘图(D)", 41], ["修改(M)", 44],
  ["钢筋量(Q)", 54], ["视图(V)", 40], ["工具(T)", 39], ["云应用(Y)", 51], ["BI", 133], ["帮助(H)", 41], ["版本号(B)", 51],
];

export default function App() {
  return (
    <Page>
      <GlobalStyle />
      <TitleBar>
        <Icon name="ggj" />
        <span>广联达BIM钢筋算量软件 GGJ2013 - [C:\Users\Administrator.PC-20141127NRHM\Desktop\白龙村-2016-08-25-13-27-07(2166版)_16G.GGJ12]</span>
        <WinButtons>
          <button type="button" aria-label="最小化">
            <svg width="16" height="16" stroke="#888"><path d="M3 8.500h10" /></svg>
          </button>
          <button type="button" aria-label="还原">
            <svg width="16" height="16" stroke="#888" fill="none"><path d="M3.500 5.500h7v7h-7zM5.500 5V3.500h7v7H11" /></svg>
          </button>
          <button type="button" aria-label="关闭">
            <svg width="16" height="16" stroke="#888"><path d="m3 3 10 10M13 3 3 13" /></svg>
          </button>
        </WinButtons>
      </TitleBar>

      <MenuBar>
        <MenuItems>
          {menus.map(([t, w]) => (
            <MenuButton key={t} type="button" $w={w}>{t}</MenuButton>
          ))}
          <MenuButton type="button" $w={76}>
            <Icon name="changeDoc" />
            新建变更
            <Caret />
          </MenuButton>
          <MenuButton type="button" $w={58}>
            <Icon name="mascot" />
            广小二
          </MenuButton>
        </MenuItems>
        <Band $basis={187}>
          <News href="#news">CAD草图图片管理中导?.</News>
        </Band>
        <Band>
          <Account type="button">
            <Icon name="user" />
            13907298339
            <Caret />
          </Account>
          <span>造价豆:0</span>
          <ToolButton type="button" aria-label="消息">
            <Icon name="bell" />
          </ToolButton>
          <More type="button" aria-label="更多">»</More>
        </Band>
      </MenuBar>

      <ToolBar>
        <Band $basis={151} $gap={6}>
          <Tool icon="newFile" name="新建文件" />
          <Tool icon="open" name="打开" caret />
          <Tool icon="save" name="保存" />
          <Sep />
          <Tool icon="undo" name="撤销" caret />
          <More type="button" aria-label="更多">»</More>
        </Band>
        <Band $basis={547}>
          <Tool icon="paint" label="绘图" />
          <Tool icon="sigma" label="汇总计算" />
          <Tool icon="cloudCheck" label="云检查" />
          <Tool icon="alignSlab" label="平齐板顶" dim />
          <Tool icon="binocular" label="查找图元" dim />
          <Tool icon="glasses" label="查看钢筋量" dim />
          <Tool icon="batch" label="批量选择" dim />
          <More type="button" aria-label="更多">»</More>
        </Band>
        <Band $gap={6}>
          <Combo>
            <Icon name="plane" />
            <select aria-label="视图模式"><option>二维</option></select>
            <Caret />
          </Combo>
          <Tool icon="cube" label="俯视" dim caret />
          <Tool icon="orbit" label="动态观察" dim />
          <Tool icon="local3d" label="局部三维" dim />
          <Sep />
          <Tool icon="fullscreen" label="全屏" dim />
          <Tool icon="zoom" label="缩放" dim caret />
          <Tool icon="pan" label="平移" dim caret />
          <Tool icon="rotate" label="屏幕旋转" dim caret tight />
          <Sep />
          <Tool icon="floors" label="选择楼层" dim />
          <More type="button" aria-label="更多">»</More>
        </Band>
      </ToolBar>

      <Main>
        <NavPanel>
          <NavHead>
            <h2>模块导航栏</h2>
            <button type="button" aria-label="固定"><Icon name="pin" /></button>
            <button type="button" aria-label="关闭面板"><Icon name="close" /></button>
          </NavHead>
          <NavButton type="button">工程设置</NavButton>
          <NavButton type="button">绘图输入</NavButton>
          <NavTools>
            <button type="button" aria-label="全部展开"><Icon name="plusPlus" /></button>
            <button type="button" aria-label="全部折叠"><Icon name="minusMinus" /></button>
          </NavTools>
          <TreeBox>
            {nodes.map((n, i) => (
              <TreeNode key={i} n={n} />
            ))}
          </TreeBox>
          <NavButton type="button">单构件输入</NavButton>
          <NavButton type="button">报表预览</NavButton>
        </NavPanel>

        <Center>
          <CenterTools>
            <Tool icon="addItem" label="新建" caret tight />
            <Tool icon="remove" label="删除" />
            <Tool icon="copy" label="复制" />
            <Tool icon="rename" label="重命名" />
            <Tight $gap={2}>
              <Sep />
              <Tool label="楼" />
            </Tight>
          </CenterTools>
          <CenterBody>
            <ListPanel>
              <SearchRow>
                <input aria-label="搜索构件" placeholder="搜索构件..." />
                <button type="button" aria-label="搜索"><Icon name="search" /></button>
              </SearchRow>
              <ListBox>
                <List>
                  {listIds.map((id) => (
                    <ListItem key={id}>
                      <svg width="40" height="16" stroke="#808080" strokeDasharray="1 1" shapeRendering="crispEdges">
                        <path d={`M31.500 0v${id === 84 ? 8 : 16}M32 8.500h8`} />
                      </svg>
                      <ListLabel $on={id === 84}>
                        <Icon name="gear" />
                        ZDYX-{id}
                      </ListLabel>
                    </ListItem>
                  ))}
                </List>
                <Scroll>
                  <button type="button" aria-label="向上滚动"><Icon name="chevUp" size={15} /></button>
                  <Thumb />
                  <button type="button" aria-label="向下滚动"><Icon name="chevDown" size={15} /></button>
                </Scroll>
              </ListBox>
            </ListPanel>
            <PropPanel>
              <h3>属性编辑</h3>
              <TableBox>
                <Table>
                  <colgroup><col /><col /></colgroup>
                  <thead>
                    <tr><th scope="col" aria-label="序号" /><th scope="col" aria-label="属性名称" /></tr>
                  </thead>
                  <tbody>
                    {props.map(([no, label, color, group]) => (
                      <tr key={no}>
                        <RowHead scope="row" $sel={no === "1"}>{no}</RowHead>
                        <Cell $color={color} $sel={no === "1"}>
                          <span>
                            {group && (
                              <svg width="13" height="13" stroke="#000" fill="none" shapeRendering="crispEdges">
                                <path d="M.5.500h12v12H.5z" stroke="#a0a0a0" />
                                <path d="M3 6.500h7M6.500 3v7" />
                              </svg>
                            )}
                            <em>{label}</em>
                          </span>
                        </Cell>
                      </tr>
                    ))}
                  </tbody>
                </Table>
              </TableBox>
            </PropPanel>
          </CenterBody>
        </Center>

        <Editor>
          <h2>截面编辑</h2>
          <EditorBody>
            <Tabs role="tablist">
              <Tab type="button" role="tab" aria-selected="false">截面</Tab>
              <Tab type="button" role="tab" aria-selected="true" $on>配筋</Tab>
            </Tabs>
            <TabPanel>
              <PanelFill>
                <EditBar>
                  <Tool label="纵筋" />
                  <Sep />
                  <Tight $gap={4}>
                    <Tool label="点" caret />
                    <BarSelect>
                      <select aria-label="钢筋规格"><option>1C6</option></select>
                      <Caret />
                    </BarSelect>
                    <Sep />
                    <Tool icon="cursor" label="选择" on />
                    <Tool label="手动设置参考线" caret />
                  </Tight>
                  <Tight $gap={5}>
                    <Sep />
                    <Tool icon="elevation" label="设置标高" />
                  </Tight>
                  <Tool icon="showLabel" label="显示标注" />
                  <Tool label="删除" dim />
                </EditBar>
                <EditBar>
                  <Tool label="横筋" />
                  <Tight $gap={3}>
                    <Sep />
                    <span>钢筋类型:</span>
                    <Tool label="水平" on />
                    <Tool label="垂直" />
                  </Tight>
                </EditBar>
                <CanvasBox>
                  <Section />
                </CanvasBox>
                <SnapBar>
                  <Snap type="button" $on><Icon name="ortho" />正交</Snap>
                  <Snap type="button" $on><Icon name="dynamic" />动态输入</Snap>
                  <Snap type="button"><Icon name="perp" />垂点</Snap>
                  <Snap type="button" $on><Icon name="mid" />中点</Snap>
                </SnapBar>
              </PanelFill>
            </TabPanel>
            <EditorStatus>
              <span>(X: 879 Y: 751)</span>
              <span>选择钢筋进行编辑，选择标注进行修改或移动;</span>
            </EditorStatus>
          </EditorBody>
        </Editor>
      </Main>

      <StatusBar>
        <StatusCell $w={148} />
        <StatusCell $w={78}>层高:4.5m</StatusCell>
        <StatusCell $w={98}>底标高:-0.03m</StatusCell>
        <StatusCell $w={48}>0</StatusCell>
        <StatusCell>名称在当前层当前构件类型下不允许重名</StatusCell>
      </StatusBar>

      <TaskBar>
        <StartButton type="button" aria-label="开始"><Icon name="win" /></StartButton>
        <TaskSearch>
          <Icon name="ring" size={24} />
          <input aria-label="搜索" placeholder="在这里输入你要搜索的内容" />
          <Icon name="mic" />
        </TaskSearch>
        <TaskApp type="button" aria-label="风车" $wide><Icon name="pinwheel" size={24} /></TaskApp>
        <TaskApp type="button" aria-label="助手" $wide>
          <Icon name="swirl" size={22} />
          <Bell><Icon name="goldBell" /></Bell>
        </TaskApp>
        <TaskApp type="button" aria-label="Edge"><Icon name="edge" size={22} /></TaskApp>
        <TaskApp type="button" aria-label="应用商店"><Icon name="store" size={24} /></TaskApp>
        <TaskApp type="button" aria-label="文件资源管理器" $run><Icon name="explorer" size={24} /></TaskApp>
        <TaskApp type="button" aria-label="浏览器" $run><Icon name="gBlue" size={24} /></TaskApp>
        <TaskApp type="button" aria-label="安全浏览器" $run><Icon name="eGreen" size={22} /></TaskApp>
        <TaskApp type="button" aria-label="便笺" $run><Icon name="notes" size={24} /></TaskApp>
        <TaskApp type="button" aria-label="广联达" $run $active><Icon name="ggj" size={24} /></TaskApp>
        <Tray>
          <Stack $w={60} $after={3}>25%<br />CPU使用</Stack>
          <Icon name="caretUp" />
          <Icon name="battery" />
          <Icon name="wifi" />
          <Icon name="volume" />
          <ImeMode>中</ImeMode>
          <Icon name="sogou" />
          <Stack $w={76}>19:21<br />2017/8/7</Stack>
          <Notice type="button" aria-label="通知">
            <Icon name="notice" />
            <span>10</span>
          </Notice>
        </Tray>
      </TaskBar>

      <ImeBar>
        <ImeLogo><Icon name="sogou" size={28} /></ImeLogo>
        <b>中</b>
        <Icon name="punct" />
        <Icon name="micBlue" />
        <Icon name="keyboard" />
        <Icon name="person" />
        <Icon name="shirt" />
        <Icon name="wrench" />
      </ImeBar>

      <Meter>
        <MeterBall>73%</MeterBall>
        <div>
          <p><svg width="7" height="9" fill="#e0503c"><path d="M3.500 0 7 4H4.500v5h-2V4H0z" /></svg>0.04K/s</p>
          <p><svg width="7" height="9" fill="#1f9d58"><path d="M3.500 9 7 5H4.500V0h-2v5H0z" /></svg>0.04K/s</p>
        </div>
        <MeterPlus type="button" aria-label="加速">
          <svg width="20" height="20">
            <circle cx="9" cy="11" r="8" fill="#2f78d6" />
            <path d="M9 6.500v9M4.500 11h9" stroke="#fff" strokeWidth="2" />
            <circle cx="15" cy="5" r="4" fill="#dd3b2f" />
          </svg>
        </MeterPlus>
      </Meter>
    </Page>
  );
}
